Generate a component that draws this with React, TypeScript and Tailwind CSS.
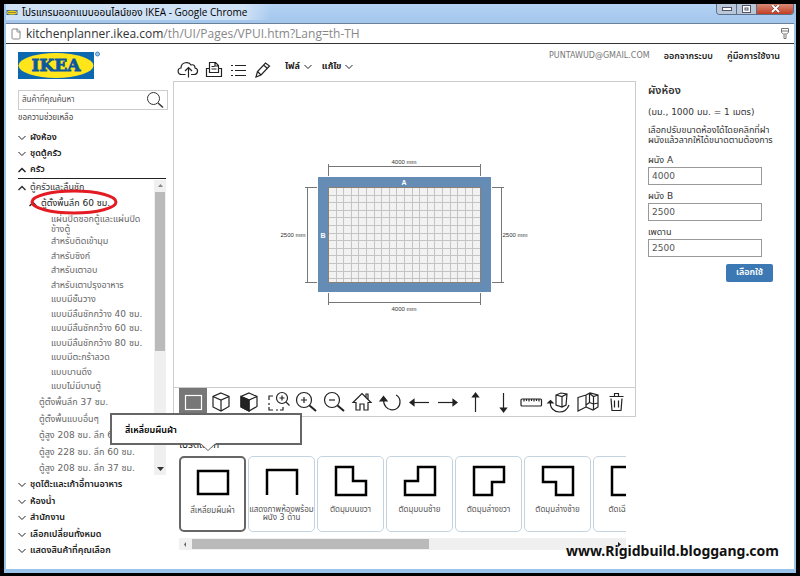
import type { ReactNode } from 'react';
import { File } from 'lucide-react';

const topCategories = [
  { label: 'ผังห้อง', open: false },
  { label: 'ชุดตู้ครัว', open: false },
  { label: 'ครัว', open: true },
];

const deepCabinets = [
  'สำหรับติดเข้ามุม',
  'สำหรับซิงก์',
  'สำหรับเตาอบ',
  'สำหรับเตาปรุงอาหาร',
  'แบบมีชั้นวาง',
  'แบบมีลิ้นชักกว้าง 40 ซม.',
  'แบบมีลิ้นชักกว้าง 60 ซม.',
  'แบบมีลิ้นชักกว้าง 80 ซม.',
  'แบบมีตะกร้าลวด',
  'แบบบานดึง',
  'แบบไม่มีบานตู้',
];

const otherCabinets = [
  'ตู้ตั้งพื้นลึก 37 ซม.',
  'ตู้ตั้งพื้นแบบอื่นๆ',
  'ตู้สูง 208 ซม. ลึก 60 ซม.',
  'ตู้สูง 228 ซม. ลึก 60 ซม.',
  'ตู้สูง 208 ซม. ลึก 37 ซม.',
];

const bottomCategories = [
  'ชุดโต๊ะและเก้าอี้ทานอาหาร',
  'ห้องน้ำ',
  'สำนักงาน',
  'เลือกเปลี่ยนทั้งหมด',
  'แสดงสินค้าที่คุณเลือก',
];

const shapes = [
  { label: 'สี่เหลี่ยมผืนผ้า', path: 'M2 5h30v23H2Z', selected: true },
  { label: 'แสดงภาพห้องพร้อมผนัง 3 ด้าน', path: 'M2 30V5h30v25' },
  { label: 'ตัดมุมบนขวา', path: 'M2 2h17v14h13v14H2Z' },
  { label: 'ตัดมุมบนซ้าย', path: 'M15 2h17v28H2V16h13Z' },
  { label: 'ตัดมุมล่างขวา', path: 'M2 2h30v15H20v13H2Z' },
  { label: 'ตัดมุมล่างซ้าย', path: 'M2 2h30v28H15V17H2Z' },
  { label: 'ตัดเฉียงมุม', path: 'M2 2h20l10 10v18H2Z' },
];

const cube = 'M11 2 19 5.500V15.500L11 20 3 16V5.500ZM3 5.500 11 9l8-3.500M11 9v11';

const tools: { name: string; icon: ReactNode }[] = [
  { name: '2D', icon: <rect x="3.500" y="4.500" width="16" height="14" /> },
  { name: '3D', icon: <path d={cube} /> },
  {
    name: '3D solid',
    icon: (
      <>
        <path d={cube} />
        <path d="M3 5.500 11 9v11L3 16Z" fill="currentColor" />
      </>
    ),
  },
  {
    name: 'Zoom area',
    icon: (
      <>
        <path d="M6 5H2v4M2 12v2M2 16v3h4M9 19h2M13 19h3v-3" />
        <circle cx="15" cy="7" r="5.500" />
        <path d="M19 11 22.500 14.500M12.500 7h5M15 4.500v5" />
      </>
    ),
  },
  {
    name: 'Zoom in',
    icon: (
      <>
        <circle cx="9" cy="9" r="7.500" />
        <path d="M6 9h6M9 6v6" />
        <path d="M14.500 14.500 21 20" strokeWidth="2" />
      </>
    ),
  },
  {
    name: 'Zoom out',
    icon: (
      <>
        <circle cx="9" cy="9" r="7.500" />
        <path d="M6 9h6" />
        <path d="M14.500 14.500 21 20" strokeWidth="2" />
      </>
    ),
  },
  { name: 'Home', icon: <path d="M2 11.500 11 2.500l9 9h-3V19h-4v-6H9v6H5v-7.500ZM15 6V3h2v5" /> },
  {
    name: 'Rotate',
    icon: (
      <>
        <path d="M4.500 8C4 22 21 22 21 11c0-3-1-5.500-4-7" />
        <path d="M1 10 4.500 5.500 8 10Z" fill="currentColor" />
      </>
    ),
  },
  { name: 'Left', icon: <><path d="M3 11.500h18" /><path d="M2 11.500 6 8.500v6Z" fill="currentColor" /></> },
  { name: 'Right', icon: <><path d="M2 11.500h18" /><path d="M21 11.500 17 8.500v6Z" fill="currentColor" /></> },
  { name: 'Up', icon: <><path d="M11.500 3v18" /><path d="M11.500 2 8.500 6h6Z" fill="currentColor" /></> },
  { name: 'Down', icon: <><path d="M11.500 2v18" /><path d="M11.500 21 8.500 17h6Z" fill="currentColor" /></> },
  {
    name: 'Measure',
    icon: (
      <>
        <rect x="1" y="8" width="20.500" height="7" rx="1" />
        <path d="M4 8v2.500M6.500 8v2M9 8v2.500M11.500 8v2M14 8v2.500M16.500 8v2M19 8v2.500" />
      </>
    ),
  },
  {
    name: 'Rotate view',
    icon: (
      <>
        <path d="M8 4 13 2l6 1-1 11-4 2-6-2ZM8 4l6 1.500 5-2.500M14 5.500V16" />
        <path d="M2.500 11c-1 6 4 10 9 10 5 0 8-3 9.500-7" />
        <path d="M0 12 2.500 9.500 5 12Z" fill="currentColor" />
      </>
    ),
  },
  {
    name: 'Walls',
    icon: <path d="M1 6.500 9 4v12l-8 4ZM9 4l4-2 8 2v12l-5 3-7-3M12.500 2.500v9L9 14M12.500 11.500l4 1.500M12.500 2.500l4 3L21 4M16.500 5.500V19M16.500 13 21 12" />,
  },
  {
    name: 'Delete',
    icon: <path d="M4.500 5.500h14M9.500 5.500v-3h4v3M6 7.500l1 12h9l1-12M9.500 9.500v7M13.500 9.500v7" />,
  },
];

const roomFields = [
  { id: 'wall-a', label: 'ผนัง A', value: '4000' },
  { id: 'wall-b', label: 'ผนัง B', value: '2500' },
  { id: 'ceiling', label: 'เพดาน', value: '2500' },
];

function Chevron({ up = false }: { up?: boolean }) {
  return (
    <svg width="8" height="6" viewBox="0 0 8 6" fill="none" stroke="currentColor" className="shrink-0">
      <path d={up ? 'M0.500 5 4 1.500 7.500 5' : 'M0.500 1 4 4.500 7.500 1'} strokeWidth={up ? 1.5 : 1} />
    </svg>
  );
}

function CategoryButton({ label, open = false }: { label: string; open?: boolean }) {
  return (
    <button className="flex h-4 items-center gap-1 text-left font-semibold whitespace-nowrap text-[#222]">
      <Chevron up={open} />
      {label}
    </button>
  );
}

function Logo() {
  return (
    <svg width="84" height="28" viewBox="0 0 84 28" aria-label="IKEA">
      <rect width="76" height="27" y="1" fill="#0b68ae" />
      <ellipse cx="38" cy="14.500" rx="37.500" ry="12.500" fill="#ffe51a" />
      <text x="38" y="20" textAnchor="middle" fill="#0b58a2" stroke="#0b58a2" strokeWidth="0.800"
        fontFamily="DejaVu Serif, serif" fontWeight="900" fontSize="17">IKEA</text>
      <circle cx="79.500" cy="3" r="2" fill="#9cc6e8" stroke="#3c86c4" />
    </svg>
  );
}

function RoomPlan() {
  const cols = Array.from({ length: 19 }, (_, i) => i + 1);
  const rows = Array.from({ length: 12 }, (_, i) => i + 1);
  return (
    <svg width="263" height="161" viewBox="273 154 263 161" fontFamily="Liberation Sans, sans-serif" fontSize="6" fill="#333">
      <rect x="318" y="177" width="173" height="115" fill="#648cb4" />
      <rect x="328.500" y="187.500" width="152" height="95" fill="#f2f2f2" stroke="#8c7f76" />
      <g stroke="#c4c4c4">
        {cols.map((c) => <path key={c} d={`M${Math.round(328 + c * 7.6) + 0.5} 188v94`} />)}
        {rows.map((r) => <path key={r} d={`M329 ${Math.round(187 + r * 7.6) + 0.5}h151`} />)}
      </g>
      <g stroke="#777" fill="none">
        <path d="M328.500 164v12M480.500 164v12M328.500 166.500h152" />
        <path d="M328.500 293v12M480.500 293v12M328.500 302.500h152" />
        <path d="M305 187.500h12M305 282.500h12M307.500 187.500v95" />
        <path d="M492 187.500h12M492 282.500h12M501.500 187.500v95" />
      </g>
      <g textAnchor="middle">
        <text x="404" y="164">4000 mm</text>
        <text x="404" y="311">4000 mm</text>
        <text x="293" y="237">2500 mm</text>
        <text x="515" y="237">2500 mm</text>
        <g fill="#fff" fontWeight="bold" fontSize="7">
          <text x="404" y="185">A</text>
          <text x="323" y="238">B</text>
        </g>
      </g>
    </svg>
  );
}

function TitleBar() {
  return (
    <header className="flex h-[19px] items-start justify-between bg-gradient-to-b from-[#b4d2f3] to-[#a3c6ec]">
      <div className="flex h-4 items-center gap-1 bg-gradient-to-r from-[#cfe1f5] from-90% to-transparent pr-6 text-[10px] whitespace-nowrap text-black">
        <svg width="12" height="5" viewBox="0 0 11 5" className="shrink-0">
          <rect width="11" height="5" fill="#3a6a9c" />
          <ellipse cx="5.500" cy="2.500" rx="5" ry="2" fill="#f2cf1b" />
          <path d="M2 2.500h7" stroke="#345" strokeDasharray="1 1" />
        </svg>
        <h1 className="font-['Open_Sans','Noto_Sans_Thai','DejaVu_Sans',sans-serif]">โปรแกรมออกแบบออนไลน์ของ IKEA - Google Chrome</h1>
      </div>
      <div className="flex h-[11px] overflow-hidden rounded-b border border-t-0 border-[#5c6f86] text-white">
        <button aria-label="Minimize" className="flex w-5 items-center justify-center border-r border-[#5c6f86] bg-[#b8c8da]">
          <svg width="10" height="4"><rect x="0.500" y="0.500" width="9" height="3" fill="#fff" stroke="#556" /></svg>
        </button>
        <button aria-label="Maximize" className="flex w-5 items-center justify-center border-r border-[#5c6f86] bg-[#b8c8da]">
          <svg width="9" height="8" fill="none">
            <rect x="0.500" y="0.500" width="8" height="7" fill="#fff" stroke="#556" />
            <rect x="3" y="3" width="3" height="2" stroke="#556" />
          </svg>
        </button>
        <button aria-label="Close" className="flex w-9 items-center justify-center bg-gradient-to-b from-[#d98a76] to-[#c23b22]">
          <svg width="9" height="8"><path d="m1 0 7 7M8 0 1 7" stroke="#633" strokeWidth="3" /><path d="m1 0 7 7M8 0 1 7" stroke="#fff" strokeWidth="2" /></svg>
        </button>
      </div>
    </header>
  );
}

function Sidebar() {
  return (
    <aside className="w-[167px] shrink-0 pt-[7px] pl-3 text-[9px]">
      <Logo />
      <div className="mt-[11px] mr-[5px] flex h-5 items-center border border-[#ccc] px-[3px]">
        <input aria-label="ค้นหา" placeholder="สินค้าที่คุณค้นหา" className="min-w-0 flex-1 text-[8px] outline-none placeholder:text-[#555]" />
        <button aria-label="Search">
          <svg width="18" height="18" viewBox="0 0 18 18" fill="none" stroke="#333">
            <circle cx="7.500" cy="7.500" r="6" />
            <path d="m12 12 5 4.500" strokeWidth="1.500" />
          </svg>
        </button>
      </div>
      <a href="#help" className="block h-5 text-[8px] leading-4 text-[#444]">ขอความช่วยเหลือ</a>

      <nav className="mr-[7px]">
        <div className="flex h-[49px] flex-col justify-between border-b border-[#222]">
          {topCategories.map((c) => <CategoryButton key={c.label} {...c} />)}
        </div>
        <div className="flex h-[297px] justify-between overflow-hidden">
          <div className="relative pt-[1px] text-[#666]">
            <button className="flex h-4 items-center gap-1 text-[#333]"><Chevron up />ตู้ครัวและลิ้นชัก</button>
            <button className="flex h-4 items-center gap-1 pl-[11px] text-[#222]"><Chevron up />ตู้ตั้งพื้นลึก 60 ซม.</button>
            <svg className="absolute top-[9px] left-3" width="88" height="28" viewBox="0 0 88 28" fill="none">
              <ellipse cx="44" cy="14" rx="42" ry="11" stroke="#e31b23" strokeWidth="3" />
            </svg>
            <div className="w-[128px] pt-[1px] pl-[33px]">
              <button className="block h-[21px] w-[90px] text-left leading-[10px]">แผ่นปิดซอกตู้และแผ่นปิดข้างตู้</button>
              <ul className="flex h-[159px] flex-col justify-between leading-[14px] whitespace-nowrap">
                {deepCabinets.map((c) => <li key={c}><button className="block">{c}</button></li>)}
              </ul>
            </div>
            <ul className="flex h-[83px] flex-col justify-between pt-[1px] pl-[21px] leading-4 whitespace-nowrap">
              {otherCabinets.map((c) => <li key={c}><button className="block">{c}</button></li>)}
            </ul>
          </div>
          <div className="mt-[1px] mb-[1px] flex w-[12px] flex-col items-center justify-between bg-[#f0f0f0]">
            <svg width="11" height="12"><path d="M3 7h5L5.500 4Z" fill="#888" /></svg>
            <div className="mb-auto h-[159px] w-[10px] bg-[#bababa]" />
            <svg width="11" height="12"><path d="M2 4h7L5.500 8Z" fill="#333" /></svg>
          </div>
        </div>
        <div className="flex h-[83px] flex-col justify-between pt-[1px]">
          {bottomCategories.map((c) => <CategoryButton key={c} label={c} />)}
        </div>
      </nav>
    </aside>
  );
}

function TopTools() {
  return (
    <div className="flex h-[37px] items-start justify-between pr-[14px]">
      <div className="flex items-center gap-[5px] pt-[16px] pl-[4px] text-[#222]">
        <button aria-label="Upload">
          <svg width="22" height="18" viewBox="0 0 22 18" fill="none" stroke="currentColor" strokeWidth="1.200">
            <path d="M8.500 13.500H5C0 13.500 0 7.500 4 7 4 1 12 0 14 4c3-1 4 1 4 3 4 1 3 6.500-1 6.500h-3M11.500 16.500V7M8 10l3.500-3.500L15 10" />
          </svg>
        </button>
        <button aria-label="Print">
          <svg width="20" height="18" viewBox="0 0 20 18" fill="none" stroke="currentColor" strokeWidth="1.200">
            <path d="M5.500 11.500v-10h6l3 3v7ZM11 2v3h3M7.500 5.500h3M7.500 8h5M5 7.500H2.500v8h15v-8H15" />
          </svg>
        </button>
        <button aria-label="List" className="pl-[1px]">
          <svg width="18" height="18" viewBox="0 0 18 18" fill="none" stroke="currentColor" strokeWidth="1.200">
            <path d="M1 4.500h2M5 4.500h11M1 9.500h2M5 9.500h11M1 14.500h2M5 14.500h11" />
          </svg>
        </button>
        <button aria-label="Edit">
          <svg width="20" height="18" viewBox="0 0 20 18" fill="none" stroke="currentColor" strokeWidth="1.200">
            <path d="m3 16 1.500-5.500L12.500 2l4 3-8.500 9Zm1.500-5.500L8 14M10.500 4l4 3.500" />
          </svg>
        </button>
        <button className="flex items-center gap-1 pb-[7px] pl-[7px] text-[9px] font-bold">ไฟล์<Chevron /></button>
        <button className="flex items-center gap-1 pb-[7px] pl-[5px] text-[9px] font-bold">แก้ไข<Chevron /></button>
      </div>
      <div className="flex gap-[14px] pt-[5px] text-[9px] leading-[14px] whitespace-nowrap">
        <span className="text-[8px] text-[#777]">PUNTAWUD@GMAIL.COM</span>
        <a href="#logout" className="font-semibold text-[#222]">ออกจากระบบ</a>
        <a href="#manual" className="font-semibold text-[#222]">คู่มือการใช้งาน</a>
      </div>
    </div>
  );
}

function ShapePicker() {
  return (
    <section className="pt-[19px] pr-[10px] pl-[6px]">
      <div className="relative">
        <h2 className="h-5 text-[10px] leading-[18px] text-[#222]">โปรดเลือก</h2>
        <div role="tooltip" className="absolute bottom-[11px] left-[-69px] flex h-8 w-[192px] items-center border-2 border-[#666] bg-white pt-1 pl-[13px] text-[9px] font-semibold text-black">
          สี่เหลี่ยมผืนผ้า
          <svg className="absolute top-[27px] left-[87px]" width="18" height="10" viewBox="0 0 18 10">
            <path d="M0 0h18L9 9Z" fill="#fff" />
            <path d="M2 2 9 8.500 16 2" fill="none" stroke="#666" />
          </svg>
        </div>
      </div>
      <div className="flex gap-[2px] overflow-hidden">
        {shapes.map((s) => (
          <button
            key={s.label}
            className={`flex h-[76px] w-[67px] shrink-0 flex-col items-center rounded-[5px] pt-[8px] text-[8px] leading-[8px] text-[#555] ${s.selected ? 'border-2 border-[#666]' : 'border border-[#c3d3df]'}`}
          >
            <svg width="34" height="32" viewBox="0 0 34 32" fill="none" stroke="#000" strokeWidth="2.500" className="shrink-0">
              <path d={s.path} />
            </svg>
            <span className="mt-[9px]">{s.label}</span>
          </button>
        ))}
      </div>
      <div className="mt-[6px] flex h-[12px] items-center bg-[#f0f0f0]">
        <svg width="13" height="12"><path d="M7 4v5L5 6.500Z" fill="#666" /></svg>
        <div className="h-[10px] w-[53%] bg-[#bababa]" />
        <svg width="13" height="12" className="ml-auto"><path d="M5 4v5L8 6.500Z" fill="#222" /></svg>
      </div>
    </section>
  );
}

function RoomPanel() {
  return (
    <form className="flex w-[158px] shrink-0 flex-col pt-[2px] pr-[21px] pl-3 text-[9px] text-[#333]">
      <h2 className="text-[11px] leading-4 font-semibold">ผังห้อง</h2>
      <p className="mt-[5px] leading-4 whitespace-nowrap">(มม., 1000 มม. = 1 เมตร)</p>
      <p className="mt-[5px] mb-1 w-[130px] leading-[10px]">เลือกปรับขนาดห้องได้โดยคลิกที่ฝา<br />ผนังแล้วลากให้ได้ขนาดตามต้องการ</p>
      {roomFields.map((f) => (
        <div key={f.id} className="flex h-9 flex-col">
          <label htmlFor={f.id} className="h-[18px] pt-1 leading-[14px]">{f.label}</label>
          <input id={f.id} defaultValue={f.value} className="h-[18px] w-[114px] border border-[#999] px-[3px] text-[#555]" />
        </div>
      ))}
      <button type="button" className="mt-[7px] h-[18px] w-[47px] self-end rounded-[2px] bg-[#3c79b4] font-semibold text-white">เลือกใช้</button>
    </form>
  );
}

export default function App() {
  return (
    <div className="flex min-h-screen flex-col bg-black px-[4px] pt-1 pb-[3px] font-['DejaVu_Sans','Noto_Sans_Thai','Noto_Sans',sans-serif]">
      <div className="relative flex flex-1 flex-col border-x-2 border-b-4 border-[#9cc3ea] bg-white">
        <TitleBar />
        <div className="flex h-[21px] items-center border-t border-b border-t-[#6b7f99] border-b-[#333] px-1 font-['Open_Sans',sans-serif] text-[12px] text-[#888]">
          <File size={12} strokeWidth={2} className="mr-1 shrink-0" />
          <p className="flex-1 whitespace-nowrap"><span className="text-[#333]">kitchenplanner.ikea.com</span>/th/UI/Pages/VPUI.htm?Lang=th-TH</p>
          <svg width="10" height="13" viewBox="0 0 10 13" fill="none" stroke="#777">
            <path d="M1.500 1.500h7v4l-2 1.500h-3l-2-1.500ZM2 4h6M4 7.500v4h2v-4" />
          </svg>
        </div>
        <div className="flex flex-1">
          <Sidebar />
          <div className="flex min-w-0 flex-1 flex-col">
            <TopTools />
            <div className="flex flex-1">
              <main className="min-w-0 flex-1">
                <div className="border border-[#ccc]">
                  <div className="flex h-[305px] items-center justify-center"><RoomPlan /></div>
                  <div className="flex h-[29px] items-center justify-between border-t border-[#ccc] px-[5px]">
                    {tools.map((t, i) => (
                      <button key={t.name} aria-label={t.name} className={`flex h-[28px] w-[28px] shrink-0 items-center justify-center ${i === 0 ? 'bg-[#777] text-white' : 'text-[#222]'}`}>
                        <svg width="22" height="22" viewBox="0 0 22 22" fill="none" stroke="currentColor" strokeWidth="1.200" overflow="visible">{t.icon}</svg>
                      </button>
                    ))}
                  </div>
                </div>
                <ShapePicker />
              </main>
              <RoomPanel />
            </div>
          </div>
        </div>
        <p className="absolute right-[15px] bottom-[8px] font-['Noto_Sans',sans-serif] text-[14px] leading-5 font-bold text-[#111]">www.Rigidbuild.bloggang.com</p>
      </div>
    </div>
  );
}
